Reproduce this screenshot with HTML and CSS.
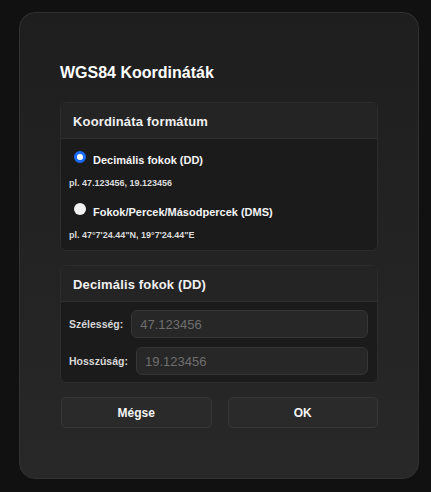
FILE: index.html
```html
<!DOCTYPE html>
<html lang="hu">
<head>
<meta charset="utf-8">
<title>WGS84 Koordináták</title>
<link rel="stylesheet" href="styles.css">
</head>
<body>
<div class="dialog">
  <h1 class="title">WGS84 Koordináták</h1>

  <section class="panel">
    <div class="panel-head">Koordináta formátum</div>
    <div class="panel-body options">
      <div class="option">
        <label class="radio-row"><input type="radio" name="fmt" class="radio" checked><span>Decimális fokok (DD)</span></label>
        <div class="example">pl. 47.123456, 19.123456</div>
      </div>
      <div class="option">
        <label class="radio-row"><input type="radio" name="fmt" class="radio"><span>Fokok/Percek/Másodpercek (DMS)</span></label>
        <div class="example">pl. 47°7'24.44"N, 19°7'24.44"E</div>
      </div>
    </div>
  </section>

  <section class="panel">
    <div class="panel-head">Decimális fokok (DD)</div>
    <div class="panel-body fields">
      <div class="field"><label class="field-label">Szélesség:</label><input class="input" type="text" placeholder="47.123456"></div>
      <div class="field"><label class="field-label">Hosszúság:</label><input class="input" type="text" placeholder="19.123456"></div>
    </div>
  </section>

  <div class="actions">
    <button class="btn">Mégse</button>
    <button class="btn">OK</button>
  </div>
</div>
</body>
</html>
```

FILE: styles.css
```css
html, body {
  margin: 0;
  padding: 0;
  background: #111111;
  font-family: "Liberation Sans", Arial, sans-serif;
  color: #f2f2f2;
}
body {
  padding: 12px 0 0 19px;
}
.dialog {
  box-sizing: border-box;
  width: 400px;
  height: 467px;
  padding: 50px 40px 40px 40px;
  border: 1px solid #323232;
  border-radius: 16px;
  background: linear-gradient(180deg, #1e1e1e 0%, #232323 50%, #282828 100%);
  display: flex;
  flex-direction: column;
}
.title {
  margin: 0 0 19px 0;
  font-size: 16px;
  line-height: 20px;
  font-weight: bold;
  color: #ffffff;
}
.panel {
  border: 1px solid #2c2c2c;
  border-radius: 6px;
  background: #1b1b1b;
  margin-bottom: 14px;
  overflow: hidden;
}
.panel-head {
  background: #242424;
  padding: 11px 12px 8px 12px;
  font-size: 13px;
  line-height: 16px;
  font-weight: bold;
  letter-spacing: 0.15px;
  color: #f0f0f0;
  border-bottom: 1px solid #303030;
}
.options {
  padding: 13px 8px 8px 8px;
  display: flex;
  flex-direction: column;
  gap: 14px;
}
.option {
  display: flex;
  flex-direction: column;
  gap: 8px;
}
.radio-row {
  display: flex;
  align-items: flex-start;
  font-size: 11px;
  line-height: 16px;
  font-weight: bold;
  color: #f4f4f4;
}
.radio {
  appearance: none;
  -webkit-appearance: none;
  box-sizing: border-box;
  width: 12px;
  height: 12px;
  margin: -1px 7px 0 5px;
  border-radius: 50%;
  background: #f2f2f2;
  border: none;
  flex: none;
}
.radio:checked {
  background: #ffffff;
  border: 3px solid #1a6bff;
}
.example {
  font-size: 9px;
  line-height: 14px;
  font-weight: bold;
  color: #dcdcdc;
}
.fields {
  padding: 8px 9px 7px 8px;
  display: flex;
  flex-direction: column;
  gap: 9px;
}
.field {
  display: flex;
  align-items: center;
  gap: 8px;
}
.field-label {
  font-size: 10.5px;
  font-weight: bold;
  color: #d8d8d8;
}
.input {
  flex: 1;
  min-width: 0;
  box-sizing: border-box;
  height: 28px;
  padding: 0 8px;
  border: 1px solid #353535;
  border-radius: 6px;
  background: #272727;
  color: #dddddd;
  font-family: "Liberation Sans", Arial, sans-serif;
  font-size: 13px;
  outline: none;
}
.input::placeholder {
  color: #6e6e6e;
}
.actions {
  display: flex;
  gap: 16px;
  padding-left: 1px;
}
.btn {
  flex: 1;
  height: 31px;
  border: 1px solid #363636;
  border-radius: 5px;
  background: #2a2a2a;
  color: #f4f4f4;
  font-family: "Liberation Sans", Arial, sans-serif;
  font-size: 12px;
  font-weight: bold;
}
```
